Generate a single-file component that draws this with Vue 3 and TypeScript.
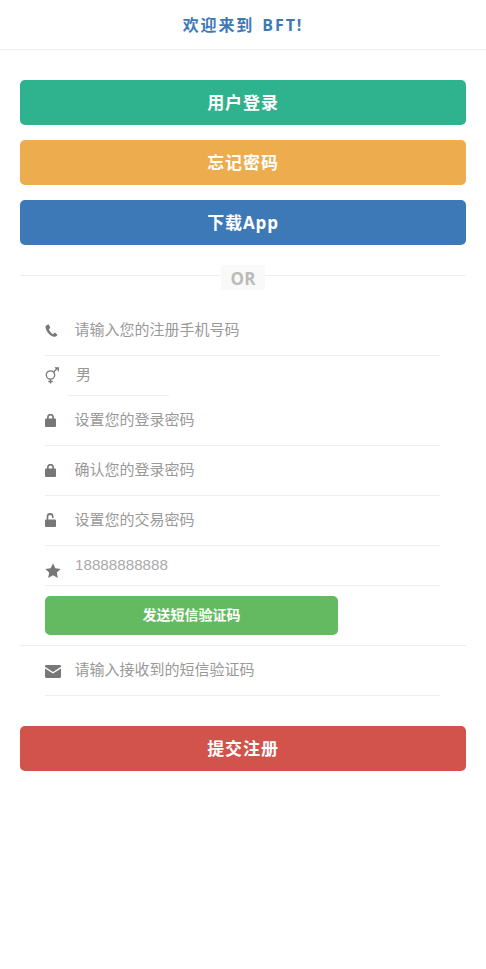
<script setup lang="ts">
const topButtons = [
  { label: '用户登录', cls: 'green' },
  { label: '忘记密码', cls: 'orange' },
  { label: '下载App', cls: 'blue' },
]
</script>

<template>
  <div class="page">
    <header class="head">欢迎来到 BFT!</header>
    <main class="main">
      <button v-for="b in topButtons" :key="b.label" class="btn" :class="b.cls"><span class="lift">{{ b.label }}</span></button>
      <div class="or"><span>OR</span></div>

      <div class="form">
        <div class="row">
          <svg class="ico phone" viewBox="0 0 14 14"><path d="M3.400.600 1.300 1.500C.600 2 .400 3 .700 4.200c.600 2.400 1.900 4.600 3.700 6.500 1.500 1.500 3 2.400 4.800 2.900 1.200.300 2.300.200 3-.300l1-1.300c.200-.300.100-.600-.100-.800L10.800 9.500c-.300-.200-.600-.100-.800.100L9 10.800c-.200.200-.500.300-.800.100C6.500 9.900 4.900 8 4.200 6c-.100-.300 0-.500.200-.700l1-.700c.300-.200.300-.500.200-.800L4.200.800C4 .500 3.700.500 3.400.600Z" /></svg>
          <span class="ph">请输入您的注册手机号码</span>
        </div>
        <div class="row gender">
          <svg class="ico mars" viewBox="0 0 14 17"><g fill="none" stroke="#777" stroke-width="1.300"><circle cx="5.500" cy="8" r="4.200" /><path d="M5.500 12.200V16.500M3.300 14.500H7.700M8.500 5l4.500-4.300M9.800.800H13.300V4.300" /></g></svg>
          <span class="select">男</span>
        </div>
        <div class="row">
          <svg class="ico lock" viewBox="0 0 11 13"><path d="M2 4.500V3.300a3.300 3.300 0 0 1 7 0V4.500H10a1 1 0 0 1 1 1V12a1 1 0 0 1-1 1H1a1 1 0 0 1-1-1V5.500a1 1 0 0 1 1-1H2Zm1.700 0h3.600V3.300a1.800 1.800 0 0 0-3.600 0V4.500Z" /></svg>
          <span class="ph">设置您的登录密码</span>
        </div>
        <div class="row">
          <svg class="ico lock" viewBox="0 0 11 13"><path d="M2 4.500V3.300a3.300 3.300 0 0 1 7 0V4.500H10a1 1 0 0 1 1 1V12a1 1 0 0 1-1 1H1a1 1 0 0 1-1-1V5.500a1 1 0 0 1 1-1H2Zm1.700 0h3.600V3.300a1.800 1.800 0 0 0-3.600 0V4.500Z" /></svg>
          <span class="ph">确认您的登录密码</span>
        </div>
        <div class="row">
          <svg class="ico unlock" viewBox="0 0 11 14"><path d="M1.700 6.500V3.500a3.400 3.400 0 0 1 6.800 0V5H7V3.500a1.900 1.900 0 0 0-3.700 0V6.500H10a1 1 0 0 1 1 1V13a1 1 0 0 1-1 1H1a1 1 0 0 1-1-1V7.500a1 1 0 0 1 1-1h.700Z" /></svg>
          <span class="ph">设置您的交易密码</span>
        </div>
        <div class="row short">
          <svg class="ico star" viewBox="0 0 16 15"><path d="m8 .300 2.300 4.900 5.400.700-3.900 3.700 1 5.300L8 12.300l-4.800 2.600 1-5.300L.300 5.900l5.400-.700Z" /></svg>
          <span class="num">18888888888</span>
        </div>
        <button class="sms"><span class="lift2">发送短信验证码</span></button>
      </div>
      <div class="rule"></div>
      <div class="form">
        <div class="row">
          <svg class="ico mail" viewBox="0 0 16 13"><path d="M1.200 0h13.600C15.500 0 16 .500 16 1.200v.500L8 6.900 0 1.700v-.500C0 .500.500 0 1.200 0ZM0 3.400l8 5.200 8-5.200v8.400c0 .700-.500 1.200-1.200 1.200H1.200C.500 13 0 12.500 0 11.800Z" /></svg>
          <span class="ph">请输入接收到的短信验证码</span>
        </div>
      </div>
      <button class="btn red"><span class="lift">提交注册</span></button>
    </main>
  </div>
</template>

<style>
html, body { margin: 0; background: #fff; }
</style>

<style scoped>
.page {
  width: 486px;
  min-height: 969px;
  background: #fff;
  font-family: "Open Sans", "Noto Sans CJK SC", sans-serif;
}
.head {
  height: 49px;
  line-height: 51px;
  border-bottom: 1px solid #eee;
  text-align: center;
  font-size: 16px;
  font-weight: 700;
  letter-spacing: 1.900px;
  color: #3e79b7;
  word-spacing: 2px;
}
.main {
  padding: 30px 20px 0;
  display: flex;
  flex-direction: column;
}
.btn {
  height: 45px;
  margin: 0 0 15px;
  padding: 0;
  border: 0;
  border-radius: 5px;
  color: #fff;
  font: 700 17px "Open Sans", "Noto Sans CJK SC", sans-serif;
  letter-spacing: .9px;
  text-align: center;
}
.lift { position: relative; top: -1px; }
.lift2 { position: relative; top: -2px; }
.green { background: #2fb38e; }
.orange { background: #edac4d; }
.blue { background: #3e79b7; }
.red { background: #d2524c; margin: 30px 0 0; }
.or {
  height: 1px;
  margin: 15px 0 30px;
  background: #eee;
  display: flex;
  justify-content: center;
  overflow: visible;
}
.or span {
  flex: none;
  width: 44px;
  height: 25px;
  margin-top: -10px;
  background: #f9f9f9;
  color: #bbb;
  font-size: 17px;
  font-weight: 700;
  line-height: 27px;
  text-align: center;
}
.form {
  margin: 0 26px 0 25px;
  display: flex;
  flex-direction: column;
}
.row {
  height: 49px;
  border-bottom: 1px solid #eee;
  display: flex;
  align-items: center;
  position: relative;
}
.row.short {
  height: 39px;
  align-items: flex-start;
}
.row.gender {
  height: 40px;
  border-bottom: 0;
}
.ph, .select {
  position: absolute;
  left: 29.500px;
  font-size: 15px;
  font-weight: 400;
  color: #999;
  line-height: 20px;
}
.ph { top: 13px; }
.select {
  top: 0;
  left: 22px;
  width: 93px;
  height: 39px;
  padding-left: 9px;
  line-height: 37px;
  border-bottom: 1px solid #eee;
}
.num {
  position: absolute;
  left: 30px;
  top: 9px;
  font: 15.200px/20px "Liberation Sans", Arial, sans-serif;
  color: #aaa;
}
.ico { display: block; fill: #777; flex: none; }
.phone { width: 13px; height: 13px; margin-top: -1px; }
.mars { width: 14px; height: 17px; margin-top: -2px; }
.lock { width: 11px; height: 13px; margin-top: 0; }
.unlock { width: 11px; height: 14px; margin-top: -1px; }
.star { width: 16px; height: 15px; margin-top: 17px; }
.mail { width: 16px; height: 13px; margin-top: 2px; }
.sms {
  width: 293px;
  height: 39px;
  margin: 10px 0;
  padding: 0;
  border: 0;
  border-radius: 5px;
  background: #64ba60;
  color: #fff;
  font: 700 14px "Open Sans", "Noto Sans CJK SC", sans-serif;
  text-align: center;
}
.rule { height: 1px; background: #eee; }
</style>
